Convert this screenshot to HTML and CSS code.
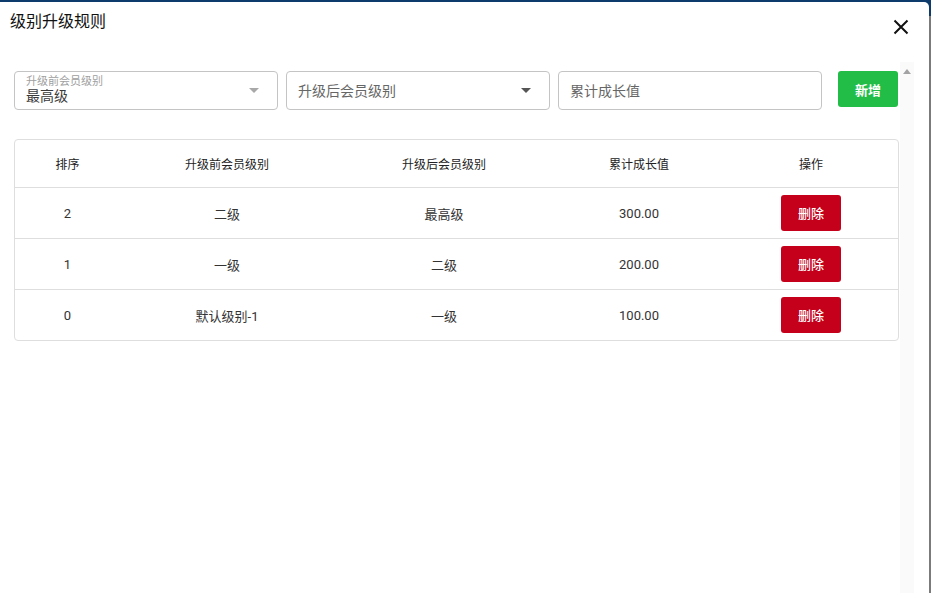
FILE: index.html
```html
<!DOCTYPE html>
<html lang="zh">
<head>
<meta charset="utf-8">
<title>级别升级规则</title>
<link rel="stylesheet" href="styles.css">
</head>
<body>
<div class="dialog">
  <div class="dialog-head">
    <h1 class="title">级别升级规则</h1>
    <button class="close" aria-label="关闭">
      <svg width="16" height="16" viewBox="0 0 16 16"><path d="M1.5 1.5 L14.5 14.5 M14.5 1.5 L1.5 14.5" stroke="#111" stroke-width="2" fill="none"/></svg>
    </button>
  </div>
  <div class="dialog-body">
    <div class="content">
      <div class="toolbar">
        <div class="field select filled">
          <div class="field-text">
            <span class="float-label">升级前会员级别</span>
            <span class="value">最高级</span>
          </div>
          <span class="caret light"></span>
        </div>
        <div class="field select">
          <div class="field-text"><span class="placeholder">升级后会员级别</span></div>
          <span class="caret"></span>
        </div>
        <div class="field">
          <div class="field-text"><span class="placeholder">累计成长值</span></div>
        </div>
        <button class="btn-add">新增</button>
      </div>
      <div class="table">
        <div class="row head">
          <div class="c1">排序</div><div class="c2">升级前会员级别</div><div class="c3">升级后会员级别</div><div class="c4">累计成长值</div><div class="c5">操作</div>
        </div>
        <div class="row">
          <div class="c1">2</div><div class="c2">二级</div><div class="c3">最高级</div><div class="c4">300.00</div><div class="c5"><button class="btn-del">删除</button></div>
        </div>
        <div class="row">
          <div class="c1">1</div><div class="c2">一级</div><div class="c3">二级</div><div class="c4">200.00</div><div class="c5"><button class="btn-del">删除</button></div>
        </div>
        <div class="row">
          <div class="c1">0</div><div class="c2">默认级别-1</div><div class="c3">一级</div><div class="c4">100.00</div><div class="c5"><button class="btn-del">删除</button></div>
        </div>
      </div>
    </div>
    <div class="scrollbar"><span class="arrow-up"></span></div>
  </div>
</div>
</body>
</html>
```
FILE: styles.css
```css
* { box-sizing: border-box; }
html, body { margin: 0; height: 100%; }
body {
  background: linear-gradient(#0c3b6c 0 16px, #7b7b7b 16px);
  font-family: Roboto, "Noto Sans CJK SC", sans-serif;
  color: #222;
  padding: 2px 2px 0 0;
  overflow: hidden;
}
.dialog {
  background: #fff;
  height: 591px;
  border-top-right-radius: 5px;
  display: flex;
  flex-direction: column;
}
.dialog-head {
  height: 60px;
  display: flex;
  justify-content: space-between;
  align-items: flex-start;
  padding: 9px 20px 0 10px;
}
.title {
  margin: 0;
  font-size: 16px;
  font-weight: 400;
  line-height: 22px;
  color: #111;
}
.close {
  border: 0;
  background: none;
  padding: 0;
  margin-top: 8px;
  width: 16px;
  height: 16px;
  display: flex;
}
.dialog-body {
  flex: 1;
  display: flex;
  padding-right: 15px;
}
.content {
  flex: 1;
  padding: 9px 1px 0 14px;
}
.scrollbar {
  width: 15px;
  background: #fafafa;
  display: flex;
  justify-content: center;
  padding-top: 7px;
}
.arrow-up {
  width: 0; height: 0;
  border-left: 4.5px solid transparent;
  border-right: 4.5px solid transparent;
  border-bottom: 5px solid #a3a3a3;
}
.toolbar {
  display: flex;
  align-items: flex-start;
  gap: 8px;
}
.field {
  width: 264px;
  height: 39px;
  border: 1px solid #c4c4c4;
  border-radius: 4px;
  display: flex;
  align-items: center;
  padding: 0 15px 0 11px;
}
.field-text { flex: 1; display: flex; flex-direction: column; }
.float-label { font-size: 11px; color: #a0a0a0; line-height: 12px; margin-top: -1px; }
.value { font-size: 14px; color: #3a3a3a; line-height: 16px; }
.placeholder { font-size: 14px; color: #666; line-height: 18px; }
.caret {
  width: 0; height: 0;
  border-left: 5px solid transparent;
  border-right: 5px solid transparent;
  border-top: 5px solid #555;
  margin-right: 3px;
}
.caret.light { border-top-color: #a8a8a8; }
.btn-add {
  margin-left: 8px;
  width: 60px;
  height: 36px;
  border: 0;
  border-radius: 3px;
  background: #22bd47;
  color: #fff;
  font-family: Roboto, "Noto Sans CJK SC", sans-serif;
  font-size: 13px;
  font-weight: 700;
}
.table {
  margin-top: 29px;
  border: 1px solid #dedede;
  border-radius: 4px;
  width: 885px;
}
.row {
  display: grid;
  grid-template-columns: 105px 214px 220px 170px 1fr;
  height: 51px;
  align-items: center;
  text-align: center;
  font-size: 13px;
  color: #333;
  border-top: 1px solid #dedede;
}
.row.head {
  height: 47px;
  border-top: 0;
  font-size: 12px;
  color: #222;
}
.btn-del {
  width: 60px;
  height: 36px;
  border: 0;
  border-radius: 3px;
  background: #c4001a;
  color: #fff;
  font-family: Roboto, "Noto Sans CJK SC", sans-serif;
  font-size: 13px;
  font-weight: 500;
  margin-top: -1px;
}
```
